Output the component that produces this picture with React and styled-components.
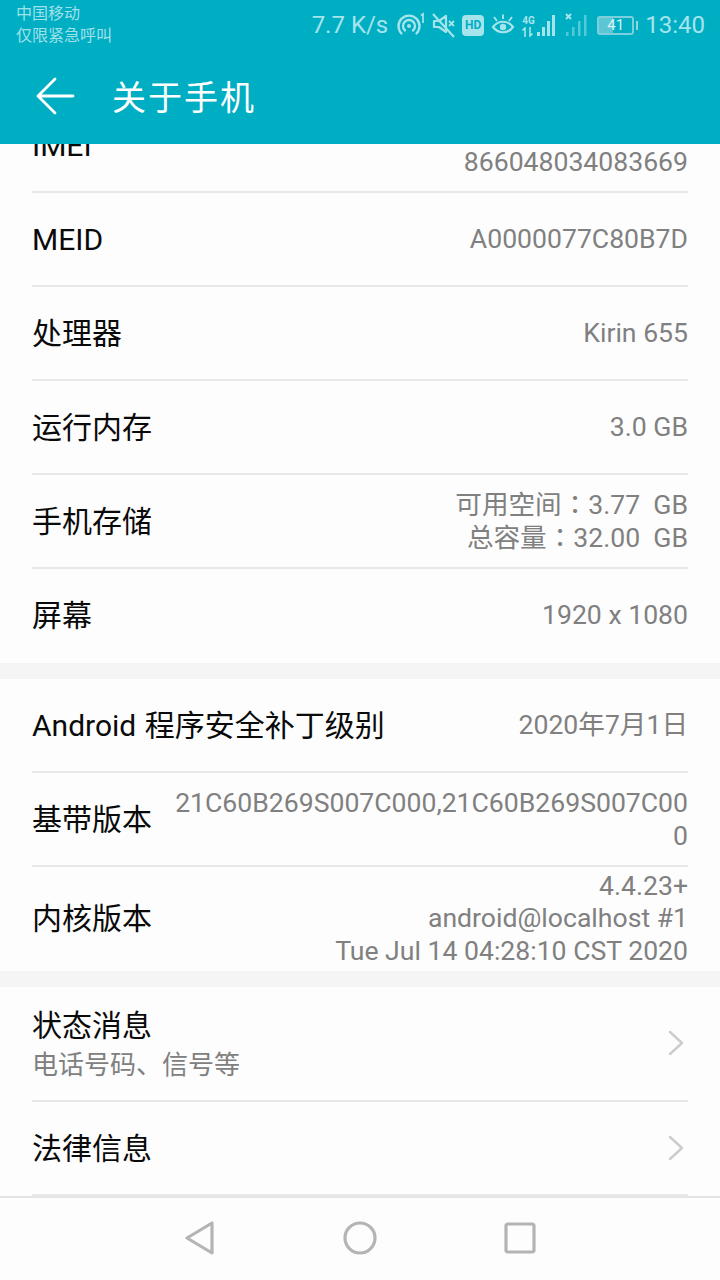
import React from "react";
import styled, { createGlobalStyle } from "styled-components";

const GlobalStyle = createGlobalStyle`
  html, body {
    margin: 0;
    padding: 0;
    background: #fdfdfd;
  }
  body {
    font-family: Roboto, "Noto Sans CJK SC", sans-serif;
  }
`;

const firstSection = [
  { label: "IMEI", value: ["", "866048034083669"] },
  { label: "MEID", value: ["A0000077C80B7D"] },
  { label: "处理器", value: ["Kirin 655"] },
  { label: "运行内存", value: ["3.0 GB"] },
  { label: "手机存储", value: ["可用空间：3.77  GB", "总容量：32.00  GB"] },
  { label: "屏幕", value: ["1920 x 1080"], last: true },
];

const secondSection = [
  { label: "Android 程序安全补丁级别", value: ["2020年7月1日"] },
  { label: "基带版本", value: ["21C60B269S007C000,21C60B269S007C000"] },
  {
    label: "内核版本",
    value: ["4.4.23+", "android@localhost #1", "Tue Jul 14 04:28:10 CST 2020"],
    last: true,
    tall: true,
  },
];

function InfoRow({ label, value, last, tall }) {
  return (
    <Row $last={last} $tall={tall}>
      <Label>{label}</Label>
      <Value>
        {value.map((line, i) => (
          <ValueLine key={i}>{line || "\u00a0"}</ValueLine>
        ))}
      </Value>
    </Row>
  );
}

function Chevron() {
  return (
    <ChevronIcon width="18" height="26" viewBox="0 0 18 26" fill="none">
      <path d="M3 2 L15 13 L3 24" stroke="#cccccc" strokeWidth="2.4" strokeLinecap="round" strokeLinejoin="round" />
    </ChevronIcon>
  );
}

function StatusIcons() {
  return (
    <Icons>
      <svg width="28" height="26" viewBox="0 0 28 26" fill="none" stroke="#a6e4ec" strokeWidth="2.4">
        <path d="M4.5 21.5 A10.5 10.5 0 1 1 19.5 21.5" strokeLinecap="round" />
        <path d="M8 18.5 A6 6 0 1 1 16 18.5" strokeLinecap="round" />
        <circle cx="12" cy="14" r="2" fill="#a6e4ec" stroke="none" />
        <path d="M24 3.5 L26 2 V11" strokeWidth="1.7" />
      </svg>
      <svg width="23" height="26" viewBox="0 0 23 26" fill="none" stroke="#a6e4ec" strokeWidth="2.2" strokeLinejoin="round">
        <path d="M2 9 H7 L14 4 V20 L7 15 H2 Z" />
        <path d="M1 2 L22 25" />
        <path d="M17 9 L22 14 M22 9 L17 14" strokeWidth="1.8" />
      </svg>
      <HdBadge>HD</HdBadge>
      <svg width="24" height="24" viewBox="0 0 24 24" fill="none" stroke="#a6e4ec" strokeWidth="2.2">
        <path d="M2 14 C7 7 17 7 22 14 C17 21 7 21 2 14 Z" />
        <circle cx="12" cy="14" r="3.2" fill="#a6e4ec" stroke="none" />
        <path d="M3 4 L6 8 M12 1.5 V6 M21 4 L18 8" strokeWidth="1.9" />
      </svg>
      <Network>
        <NetworkText>
          <span>4G</span>
          <svg width="14" height="10" viewBox="0 0 14 10" fill="none" stroke="#a6e4ec" strokeWidth="1.6">
            <path d="M3 10 V1 L0.5 3.5 M8 0 V9 L10.5 6.5" />
          </svg>
        </NetworkText>
        <svg width="22" height="24" viewBox="0 0 22 24" fill="#a6e4ec">
          <rect x="1" y="19" width="3" height="4" />
          <rect x="6" y="14" width="3" height="9" />
          <rect x="11" y="8" width="3" height="15" />
          <rect x="16" y="2" width="3" height="21" />
        </svg>
      </Network>
      <svg width="24" height="26" viewBox="0 0 24 26" fill="#a6e4ec">
        <path d="M1 2 L6 7 M6 2 L1 7" stroke="#a6e4ec" strokeWidth="2" />
        <g opacity="0.5">
          <rect x="1" y="20" width="2.5" height="4" />
          <rect x="7" y="15" width="2.5" height="9" />
          <rect x="13" y="9" width="2.5" height="15" />
          <rect x="19" y="3" width="2.5" height="21" />
        </g>
      </svg>
      <Battery>
        <BatteryBody>41</BatteryBody>
        <BatteryCap />
      </Battery>
    </Icons>
  );
}

export default function App() {
  return (
    <>
      <GlobalStyle />
      <Page>
        <Header>
          <StatusBar>
            <Carrier>
              <div>中国移动</div>
              <div>仅限紧急呼叫</div>
            </Carrier>
            <StatusRight>
              <StatusText>7.7 K/s</StatusText>
              <StatusIcons />
              <StatusText>13:40</StatusText>
            </StatusRight>
          </StatusBar>
          <TitleBar>
            <svg width="40" height="38" viewBox="0 0 40 38" fill="none" stroke="#ffffff" strokeWidth="2.8" strokeLinecap="round" strokeLinejoin="round">
              <path d="M37 19 H3 M19 2 L2 19 L19 36" />
            </svg>
            <Title>关于手机</Title>
          </TitleBar>
        </Header>
        <Scroller>
          <Sections>
            <Section>
              {firstSection.map((row) => (
                <InfoRow key={row.label} {...row} />
              ))}
            </Section>
            <Section>
              {secondSection.map((row) => (
                <InfoRow key={row.label} {...row} />
              ))}
            </Section>
            <Section>
              <LinkRow $tall>
                <div>
                  <Label>状态消息</Label>
                  <Sub>电话号码、信号等</Sub>
                </div>
                <Chevron />
              </LinkRow>
              <LinkRow>
                <Label>法律信息</Label>
                <Chevron />
              </LinkRow>
            </Section>
          </Sections>
        </Scroller>
        <NavBar>
          <svg width="32" height="36" viewBox="0 0 32 36" fill="none" stroke="#b4b4b4" strokeWidth="3.2" strokeLinejoin="round">
            <path d="M28 3 V33 L3 18 Z" />
          </svg>
          <svg width="34" height="34" viewBox="0 0 34 34" fill="none" stroke="#b4b4b4" strokeWidth="3.2">
            <circle cx="17" cy="17" r="15" />
          </svg>
          <svg width="32" height="32" viewBox="0 0 32 32" fill="none" stroke="#b4b4b4" strokeWidth="3.2" strokeLinejoin="round">
            <rect x="2" y="2" width="28" height="28" rx="2" />
          </svg>
        </NavBar>
      </Page>
    </>
  );
}

const Page = styled.div`
  display: flex;
  flex-direction: column;
  width: 720px;
  height: 1280px;
  overflow: hidden;
  background: #fdfdfd;
`;

const Header = styled.header`
  height: 144px;
  flex: none;
  background: #00aec4;
  display: flex;
  flex-direction: column;
`;

const StatusBar = styled.div`
  box-sizing: border-box;
  height: 48px;
  display: flex;
  justify-content: space-between;
  align-items: flex-start;
  padding: 3px 15px 0 16px;
`;

const Carrier = styled.div`
  font-size: 16px;
  line-height: 22px;
  color: #9fe0e9;
`;

const StatusRight = styled.div`
  display: flex;
  align-items: center;
  height: 44px;
`;

const StatusText = styled.span`
  font-size: 24px;
  color: #a6e4ec;
`;

const Icons = styled.div`
  display: flex;
  align-items: center;
  gap: 7px;
  margin: 0 7px 0 9px;
`;

const HdBadge = styled.div`
  width: 22px;
  height: 21px;
  border-radius: 4px;
  background: #a6e4ec;
  color: #00aec4;
  font-size: 12px;
  font-weight: 700;
  line-height: 21px;
  text-align: center;
`;

const Network = styled.div`
  display: flex;
  align-items: flex-end;
`;

const NetworkText = styled.div`
  display: flex;
  flex-direction: column;
  font-size: 10px;
  font-weight: 700;
  line-height: 12px;
  color: #a6e4ec;
`;

const Battery = styled.div`
  display: flex;
  align-items: center;
  gap: 2px;
  margin-left: 1px;
`;

const BatteryBody = styled.div`
  width: 37px;
  height: 19px;
  box-sizing: border-box;
  border: 2px solid #7ccfdb;
  border-radius: 3px;
  background: linear-gradient(to right, #5cc6d5 41%, transparent 41%);
  color: #d4f3f7;
  font-size: 15px;
  line-height: 15px;
  text-align: center;
`;

const BatteryCap = styled.div`
  width: 2px;
  height: 9px;
  background: #8fd8e2;
`;

const TitleBar = styled.div`
  display: flex;
  align-items: center;
  gap: 36px;
  height: 96px;
  padding-left: 36px;
`;

const Title = styled.h1`
  margin: 0 0 2px;
  font-size: 34px;
  font-weight: 400;
  letter-spacing: 2px;
  color: #ffffff;
`;

const Scroller = styled.main`
  flex: 1;
  min-height: 0;
  overflow: hidden;
`;

const Sections = styled.div`
  margin-top: -45px;
  display: flex;
  flex-direction: column;
  gap: 16px;
  background: #f5f5f5;
`;

const Section = styled.section`
  background: #fdfdfd;
  padding: 0 32px;
`;

const Row = styled.div`
  display: flex;
  justify-content: space-between;
  align-items: center;
  gap: 20px;
  box-sizing: border-box;
  height: ${(p) => (p.$tall ? "104px" : "94px")};
  padding: ${(p) => (p.$last ? "0 0 1px" : "1px 0 0")};
  border-bottom: ${(p) => (p.$last ? "none" : "2px solid #e8e8e8")};
`;

const Label = styled.div`
  flex: none;
  font-size: 30px;
  line-height: 36px;
  word-spacing: 1px;
  color: #0a0a0a;
`;

const Value = styled.div`
  min-width: 0;
  text-align: right;
  font-family: Roboto, "Noto Sans CJK TC", sans-serif;
  font-size: 26.6px;
  line-height: 32.5px;
  color: #808080;
  white-space: pre-wrap;
  word-break: break-all;
`;

const ValueLine = styled.div``;

const LinkRow = styled.div`
  display: flex;
  justify-content: space-between;
  align-items: center;
  box-sizing: border-box;
  height: ${(p) => (p.$tall ? "115px" : "94px")};
  padding: 2px 3px 0 0;
  border-bottom: 2px solid #e8e8e8;
`;

const ChevronIcon = styled.svg`
  margin-bottom: 3px;
`;

const Sub = styled.div`
  margin-top: 5px;
  font-size: 26px;
  line-height: 32px;
  color: #808080;
`;

const NavBar = styled.nav`
  flex: none;
  box-sizing: border-box;
  height: 84px;
  padding-bottom: 2px;
  border-top: 2px solid #e4e4e4;
  background: #fdfdfd;
  display: grid;
  grid-template-columns: repeat(3, 160px);
  justify-content: center;
  justify-items: center;
  align-items: center;
`;
